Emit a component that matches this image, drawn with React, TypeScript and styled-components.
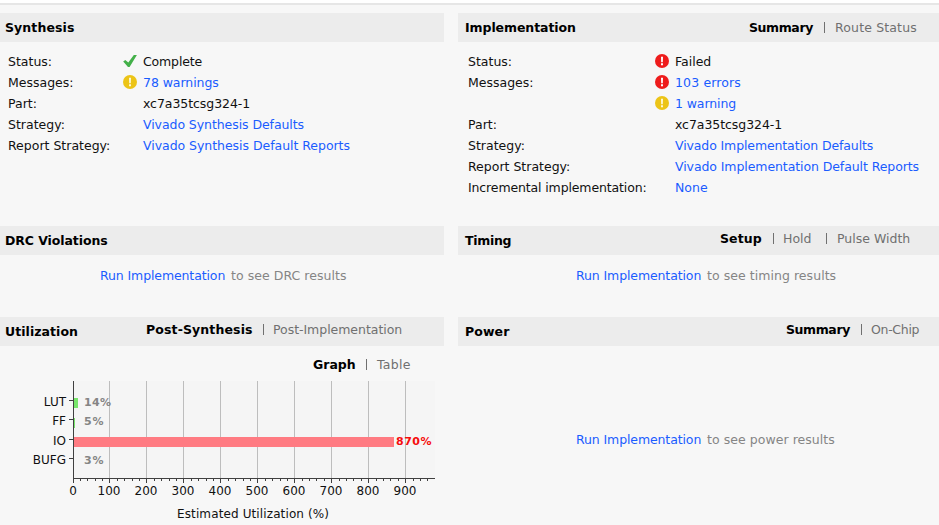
import React from "react";
import styled, { createGlobalStyle } from "styled-components";

const GlobalStyle = createGlobalStyle`
  * { box-sizing: border-box; }
  body {
    margin: 0;
    background: #f7f7f7;
    color: #111;
    font-family: "DejaVu Sans", sans-serif;
    font-size: 12.5px;
    overflow: hidden;
  }
`;

const Page = styled.div`
  width: 939px;
  height: 525px;
  overflow: hidden;
  border-top: 3px solid #fff;
`;

const Rule = styled.div`
  height: 2px;
  margin-bottom: 8px;
  background: #e6e6e6;
`;

const Dashboard = styled.main`
  display: grid;
  grid-template-columns: 444px 481px;
  grid-template-rows: 213px 91px 208px;
  column-gap: 14px;
`;

const Panel = styled.section`
  min-width: 0;
`;

const PanelHeader = styled.header<{ $start?: number; $end?: number }>`
  display: flex;
  align-items: center;
  justify-content: space-between;
  height: 29px;
  padding: 0 ${(p) => p.$end ?? 0}px 0 ${(p) => p.$start ?? 5}px;
  background: #ececec;
`;

const Title = styled.h2<{ $track?: number }>`
  margin: 0;
  font-size: 12.5px;
  line-height: 29px;
  font-weight: bold;
  letter-spacing: ${(p) => p.$track ?? 0}px;
  color: #000;
`;

const TabList = styled.nav<{ $lift?: number }>`
  display: flex;
  align-items: center;
  height: 15px;
  margin-bottom: ${(p) => p.$lift ?? 0}px;
  white-space: nowrap;
`;

const Tab = styled.a<{ $active?: boolean; $width: number; $track?: number }>`
  width: ${(p) => p.$width}px;
  line-height: 15px;
  font-weight: ${(p) => (p.$active ? "bold" : "normal")};
  letter-spacing: ${(p) => p.$track ?? 0}px;
  color: ${(p) => (p.$active ? "#000" : "#707070")};
`;

const Divider = styled.span<{ $after?: number }>`
  width: 1px;
  height: 11px;
  margin: 0 ${(p) => p.$after ?? 10}px 0 10px;
  background: #707070;
`;

const Details = styled.dl<{ $label: number; $indent: number }>`
  display: grid;
  grid-template-columns: ${(p) => p.$label}px 1fr;
  grid-auto-rows: 21px;
  margin: 9px 0 0 ${(p) => p.$indent}px;
  line-height: 21px;
  white-space: nowrap;
`;

const Label = styled.dt<{ $track?: number }>`
  margin: 0;
  letter-spacing: ${(p) => p.$track ?? 0}px;
`;

const Value = styled.dd`
  display: grid;
  grid-template-columns: 20px auto;
  justify-content: start;
  align-items: center;
  margin: 0;
`;

const ValueText = styled.span<{ $link?: boolean; $track?: number }>`
  grid-column: 2;
  letter-spacing: ${(p) => p.$track ?? 0}px;
  color: ${(p) => (p.$link ? "#1a5cff" : "#111")};
`;

const IconSvg = styled.svg`
  grid-column: 1;
  display: block;
  margin-bottom: 1px;
`;

const Notice = styled.p<{ $top: number; $left: number }>`
  display: flex;
  margin: ${(p) => p.$top}px 0 0 ${(p) => p.$left}px;
  line-height: 15px;
  letter-spacing: 0.05px;
  white-space: nowrap;
  color: #858585;
`;

const Link = styled.a`
  width: 131px;
  letter-spacing: -0.11px;
  color: #1a5cff;
`;

const ChartTabs = styled.div`
  display: flex;
  padding: 11px 0 9px 313px;
`;

const ChartSvg = styled.svg`
  display: block;
`;

const AxisText = styled.text`
  font-size: 12px;
  fill: #111;
`;

const BarText = styled.text<{ $over?: boolean }>`
  font-size: 11px;
  font-weight: bold;
  fill: ${(p) => (p.$over ? "#f50d0d" : "#858585")};
`;

type IconKind = "ok" | "warning" | "error";

function StatusIcon({ kind }: { kind: IconKind }) {
  if (kind === "ok") {
    return (
      <IconSvg width="14" height="14" viewBox="0 0 14 14">
        <path d="M0.2 7.4 2.3 5.9 5.3 8.6 10.8 1 13.9 1.1 6.6 13H5Z" fill="#43b049" />
      </IconSvg>
    );
  }
  return (
    <IconSvg width="14" height="14" viewBox="0 0 14 14">
      <circle cx="7" cy="7" r="7" fill={kind === "error" ? "#ee1c1c" : "#ecc417"} />
      <path d="M6 2.8H8L7.8 8.2H6.2ZM6 9.2H8V11.2H6Z" fill={kind === "error" ? "#fff" : "#fff8d8"} />
    </IconSvg>
  );
}

interface Detail {
  label?: string;
  labelTrack?: number;
  value: string;
  track?: number;
  icon?: IconKind;
  link?: boolean;
}

const synthesis: Detail[] = [
  { label: "Status:", value: "Complete", track: -0.15, icon: "ok" },
  { label: "Messages:", value: "78 warnings", track: -0.06, icon: "warning", link: true },
  { label: "Part:", value: "xc7a35tcsg324-1", track: -0.06 },
  { label: "Strategy:", value: "Vivado Synthesis Defaults", track: -0.07, link: true },
  { label: "Report Strategy:", value: "Vivado Synthesis Default Reports", track: -0.04, link: true },
];

const implementation: Detail[] = [
  { label: "Status:", value: "Failed", icon: "error" },
  { label: "Messages:", value: "103 errors", track: 0.14, icon: "error", link: true },
  { value: "1 warning", track: -0.1, icon: "warning", link: true },
  { label: "Part:", value: "xc7a35tcsg324-1", track: -0.06 },
  { label: "Strategy:", value: "Vivado Implementation Defaults", track: -0.12, link: true },
  { label: "Report Strategy:", value: "Vivado Implementation Default Reports", track: -0.085, link: true },
  { label: "Incremental implementation:", labelTrack: -0.13, value: "None", link: true },
];

function DetailList({ items, label, indent }: { items: Detail[]; label: number; indent: number }) {
  return (
    <Details $label={label} $indent={indent}>
      {items.map((item) => (
        <React.Fragment key={item.value}>
          <Label $track={item.labelTrack}>{item.label}</Label>
          <Value>
            {item.icon && <StatusIcon kind={item.icon} />}
            <ValueText $link={item.link} $track={item.track}>{item.value}</ValueText>
          </Value>
        </React.Fragment>
      ))}
    </Details>
  );
}

const bars = [
  { name: "LUT", percent: 14, top: 17, width: 5, tick: 20 },
  { name: "FF", percent: 5, top: 37, width: 2, tick: 39 },
  { name: "IO", percent: 870, top: 56, width: 321, tick: 59 },
  { name: "BUFG", percent: 3, top: 76, width: 1, tick: 78 },
];

const majors = Array.from({ length: 10 }, (_, i) => (i === 0 ? 73 : 72 + i * 37));
const minors = Array.from({ length: 49 }, (_, i) => Math.round(72.6 + i * 7.39)).filter((_, i) => i % 5 !== 0);

function UtilizationChart() {
  return (
    <ChartSvg width="444" height="144" viewBox="0 0 444 144">
      <g shapeRendering="crispEdges">
        <rect x="73" y="0" width="362" height="97" fill="#f5f5f5" />
        {majors.slice(1).map((x) => (
          <rect key={x} x={x} y="0" width="1" height="97" fill="#bdbdbd" />
        ))}
        {bars.map((b) => (
          <rect
            key={b.name}
            x="73"
            y={b.top}
            width={b.width}
            height="10"
            fill={b.percent > 100 ? "#ff7b82" : b.percent < 4 ? "#c5f3c3" : "#78e66c"}
          />
        ))}
        <rect x="73" y="0" width="1" height="98" fill="#404040" />
        <rect x="73" y="97" width="362" height="1" fill="#404040" />
        {bars.map((b) => (
          <rect key={b.name} x="69" y={b.tick - 1} width="4" height="1" fill="#404040" />
        ))}
        {majors.map((x) => (
          <rect key={x} x={x} y="98" width="1" height="4" fill="#404040" />
        ))}
        {minors.map((x) => (
          <rect key={x} x={x} y="98" width="1" height="2" fill="#404040" />
        ))}
      </g>
      {bars.map((b) => (
        <React.Fragment key={b.name}>
          <AxisText x="66" y={b.tick + 5} textAnchor="end">{b.name}</AxisText>
          <BarText
            x={b.percent > 100 ? 396 : 84}
            y={b.tick + 5}
            $over={b.percent > 100}
            textLength={b.percent > 100 ? 35.5 : b.percent > 9 ? 27 : 19.5}
          >
            {`${b.percent}%`}
          </BarText>
        </React.Fragment>
      ))}
      {majors.map((x, i) => (
        <AxisText key={x} x={x} y="114" textAnchor="middle">{i * 100}</AxisText>
      ))}
      <AxisText x="177" y="137" textLength="152">Estimated Utilization (%)</AxisText>
    </ChartSvg>
  );
}

export default function App() {
  return (
    <Page>
      <GlobalStyle />
      <Rule />
      <Dashboard>
        <Panel>
          <PanelHeader>
            <Title $track={0.1}>Synthesis</Title>
          </PanelHeader>
          <DetailList items={synthesis} label={115} indent={8} />
        </Panel>
        <Panel>
          <PanelHeader $start={7} $end={19}>
            <Title $track={-0.08}>Implementation</Title>
            <TabList>
              <Tab $active $width={65} $track={-0.4}>Summary</Tab>
              <Divider />
              <Tab $width={85} $track={0.15}>Route Status</Tab>
            </TabList>
          </PanelHeader>
          <DetailList items={implementation} label={187} indent={10} />
        </Panel>
        <Panel>
          <PanelHeader>
            <Title $track={-0.08}>DRC Violations</Title>
          </PanelHeader>
          <Notice $top={13} $left={100}>
            <Link>Run Implementation</Link>
            <span>to see DRC results</span>
          </Notice>
        </Panel>
        <Panel>
          <PanelHeader $start={7} $end={19}>
            <Title $track={-0.3}>Timing</Title>
            <TabList $lift={4}>
              <Tab $active $width={43} $track={0.1}>Setup</Tab>
              <Divider $after={9} />
              <Tab $width={33}>Hold</Tab>
              <Divider />
              <Tab $width={83}>Pulse Width</Tab>
            </TabList>
          </PanelHeader>
          <Notice $top={13} $left={118}>
            <Link>Run Implementation</Link>
            <span>to see timing results</span>
          </Notice>
        </Panel>
        <Panel>
          <PanelHeader $end={41}>
            <Title $track={0.05}>Utilization</Title>
            <TabList $lift={4}>
              <Tab $active $width={107} $track={0.12}>Post-Synthesis</Tab>
              <Divider $after={9} />
              <Tab $width={130} $track={-0.04}>Post-Implementation</Tab>
            </TabList>
          </PanelHeader>
          <ChartTabs>
            <TabList>
              <Tab $active $width={43}>Graph</Tab>
              <Divider />
              <Tab $width={40} $track={0.3}>Table</Tab>
            </TabList>
          </ChartTabs>
          <UtilizationChart />
        </Panel>
        <Panel>
          <PanelHeader $start={7} $end={18}>
            <Title $track={0.1}>Power</Title>
            <TabList $lift={4}>
              <Tab $active $width={65} $track={-0.4}>Summary</Tab>
              <Divider $after={9} />
              <Tab $width={50} $track={-0.3}>On-Chip</Tab>
            </TabList>
          </PanelHeader>
          <Notice $top={86} $left={118}>
            <Link>Run Implementation</Link>
            <span>to see power results</span>
          </Notice>
        </Panel>
      </Dashboard>
    </Page>
  );
}
